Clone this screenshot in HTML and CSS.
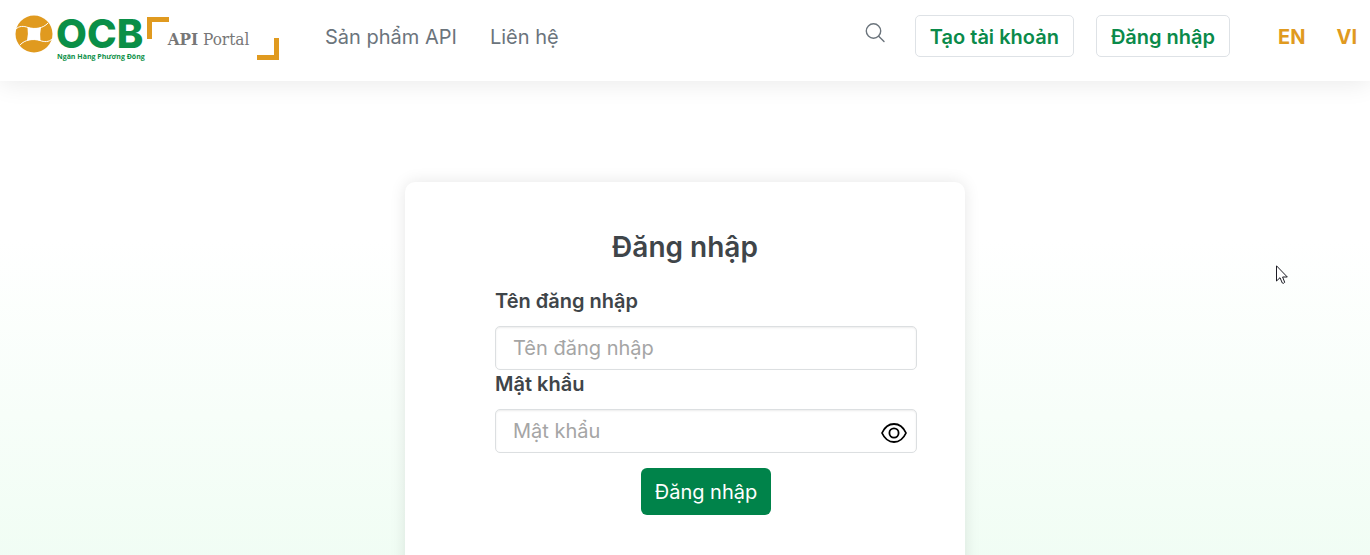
FILE: index.html
```html
<!doctype html>
<html lang="vi">
<head>
 <meta charset="utf-8">
 <title>Đăng nhập - OCB API Portal</title>
 <meta name="viewport" content="width=device-width, initial-scale=1">
 <link rel="stylesheet" href="styles.css">
</head>
<body>
<header class="header">
  <a class="logo" href="#">
    <svg class="logo-mark" viewBox="0 0 38 38" aria-hidden="true">
      <circle cx="19" cy="19" r="18.500" fill="#e09a1f"/>
      <path d="M0.500 14.500 C4 10.500 9 11 13 12.500 C20 14.500 28 13.500 33 8 M37.500 23.500 C34 27.500 29 27 25 25.500 C18 23.500 10 24.500 5 30" fill="none" stroke="#fff" stroke-width="1"/>
      <path d="M12.500 12.300 Q19 14.200 26 12.500 Q24.500 19 25.500 25.700 Q19 23.800 12 25.500 Q13.500 19 12.500 12.300 Z" fill="#fff"/>
    </svg>
    <span class="logo-text">
      <span class="logo-name">OCB</span>
      <span class="logo-sub">Ngân Hàng Phương Đông</span>
    </span>
    <span class="portal"><span><b>API</b> Portal</span></span>
  </a>
  <nav class="nav">
    <a href="#">Sản phẩm API</a>
    <a href="#">Liên hệ</a>
  </nav>
  <div class="tools">
    <button class="search" type="button" aria-label="Tìm kiếm">
      <svg viewBox="0 0 20 20" width="20" height="20" fill="none" stroke="#6b747c" stroke-width="1.400" stroke-linecap="round">
        <circle cx="8.500" cy="8" r="7.200"/>
        <path d="M13.700 13.200 L19 18.500"/>
      </svg>
    </button>
    <button class="btn-outline" type="button">Tạo tài khoản</button>
    <button class="btn-outline" type="button">Đăng nhập</button>
    <div class="lang">
      <a href="#">EN</a>
      <a href="#">VI</a>
    </div>
  </div>
</header>

<main class="main">
  <form class="card">
    <h1>Đăng nhập</h1>
    <div class="fields">
      <label for="username">Tên đăng nhập</label>
      <input id="username" type="text" placeholder="Tên đăng nhập">
      <label for="password">Mật khẩu</label>
      <div class="password">
        <input id="password" type="password" placeholder="Mật khẩu">
        <button class="eye" type="button" aria-label="Hiện mật khẩu">
          <svg viewBox="0 0 28 22" width="28" height="22" fill="none" stroke="#000" stroke-width="1.800">
            <path d="M2 11 C4.500 5.500 8.500 2 14 2 C19.500 2 23.500 5.500 26 11 C23.500 16.500 19.500 20 14 20 C8.500 20 4.500 16.500 2 11 Z" stroke-linejoin="round"/>
            <circle cx="14" cy="11" r="4.600"/>
          </svg>
        </button>
      </div>
      <button class="btn-submit" type="submit">Đăng nhập</button>
    </div>
  </form>
</main>

<svg class="cursor" viewBox="0 0 12 20" width="12" height="20" aria-hidden="true">
  <path d="M0.500 0.800 V16 L4 12.700 L6.300 18 Q7.500 19 8.700 17.300 L6.600 12 H11.300 Z" fill="#fff" stroke="#1c1c24" stroke-width="1"/>
</svg>
</body>
</html>
```
FILE: styles.css
```css
* { box-sizing: border-box; }
body {
  margin: 0;
  min-height: 100vh;
  font-family: Inter, "Liberation Sans", sans-serif;
  font-size: 20px;
  color: #3f4549;
  background: #fff linear-gradient(#fff 0, #fff 240px, #effdf3 590px);
}
a { text-decoration: none; }
button, input { font: inherit; }

/* header */
.header {
  display: flex;
  align-items: flex-start;
  height: 81px;
  padding: 15px 13px 0 15px;
  background: #fff;
  box-shadow: 0 2px 24px rgba(0,0,0,.09);
}
.logo {
  display: flex;
  flex: none;
  margin-right: 46px;
}
.logo-mark {
  width: 38px;
  height: 38px;
}
.logo-text {
  display: flex;
  flex-direction: column;
  width: 87px;
  margin-left: 3px;
  color: #0a8f47;
  white-space: nowrap;
}
.logo-name {
  font-size: 40px;
  font-weight: 800;
  line-height: 38px;
}
.logo-sub {
  padding-left: 1px;
  font-family: "Open Sans", sans-serif;
  font-size: 7px;
  font-weight: 700;
  line-height: 8px;
}
.portal {
  display: flex;
  align-items: center;
  justify-content: center;
  width: 132px;
  height: 43px;
  margin: 2px 0 0 4px;
  padding-right: 9px;
  background:
    linear-gradient(#e09a1f, #e09a1f) 0 0 / 22px 5px,
    linear-gradient(#e09a1f, #e09a1f) 0 0 / 5px 22px,
    linear-gradient(#e09a1f, #e09a1f) 100% 100% / 22px 5px,
    linear-gradient(#e09a1f, #e09a1f) 100% 100% / 5px 22px;
  background-repeat: no-repeat;
  font-family: "DejaVu Serif Condensed", "DejaVu Serif", serif;
  font-size: 17px;
  color: #777;
  white-space: nowrap;
}
.nav {
  display: flex;
  gap: 33px;
  line-height: 44px;
}
.nav a { color: #6b747c; }
.tools {
  display: flex;
  margin-left: auto;
}
.search {
  display: block;
  height: 36px;
  margin-right: 30px;
  padding: 0;
  border: 0;
  background: none;
}
.search svg { display: block; }
.btn-outline {
  height: 42px;
  margin-right: 22px;
  padding: 2px 14px 0;
  border: 1px solid #dee2e6;
  border-radius: 5px;
  background: #fff;
  color: #0a8a4a;
  font-weight: 600;
}
.lang {
  display: flex;
  gap: 31px;
  margin-left: 26px;
  line-height: 44px;
}
.lang a {
  color: #e09a1f;
  font-weight: 700;
}

/* login form */
.main { padding: 101px 20px 0; }
.card {
  max-width: 560px;
  margin: 0 auto;
  padding: 45px 48px 80px 90px;
  border-radius: 10px;
  background: #fff;
  box-shadow: 0 0 16px rgba(0,0,0,.1);
}
.card h1 {
  margin: 0 0 20px -42px;
  font-size: 28px;
  font-weight: 600;
  line-height: 40px;
  text-align: center;
}
.fields {
  display: flex;
  flex-direction: column;
}
.fields label {
  margin-bottom: 10px;
  font-weight: 600;
  line-height: 29px;
}
.fields input {
  display: block;
  width: 100%;
  height: 44px;
  padding: 0 17px;
  border: 1px solid #dcdfe1;
  border-radius: 5px;
  background: #fff;
  box-shadow: inset 0 1px 2px rgba(0,0,0,.08);
}
.fields input::placeholder { color: #a5a5a5; }
.password { position: relative; }
.eye {
  position: absolute;
  top: 13px;
  right: 9px;
  padding: 0;
  border: 0;
  background: none;
}
.eye svg { display: block; }
.btn-submit {
  align-self: center;
  height: 47px;
  margin-top: 15px;
  padding: 0 14px;
  border: 0;
  border-radius: 6px;
  background: #00834a;
  color: #fff;
}

.cursor {
  position: absolute;
  top: 265px;
  left: 1276px;
}
```
